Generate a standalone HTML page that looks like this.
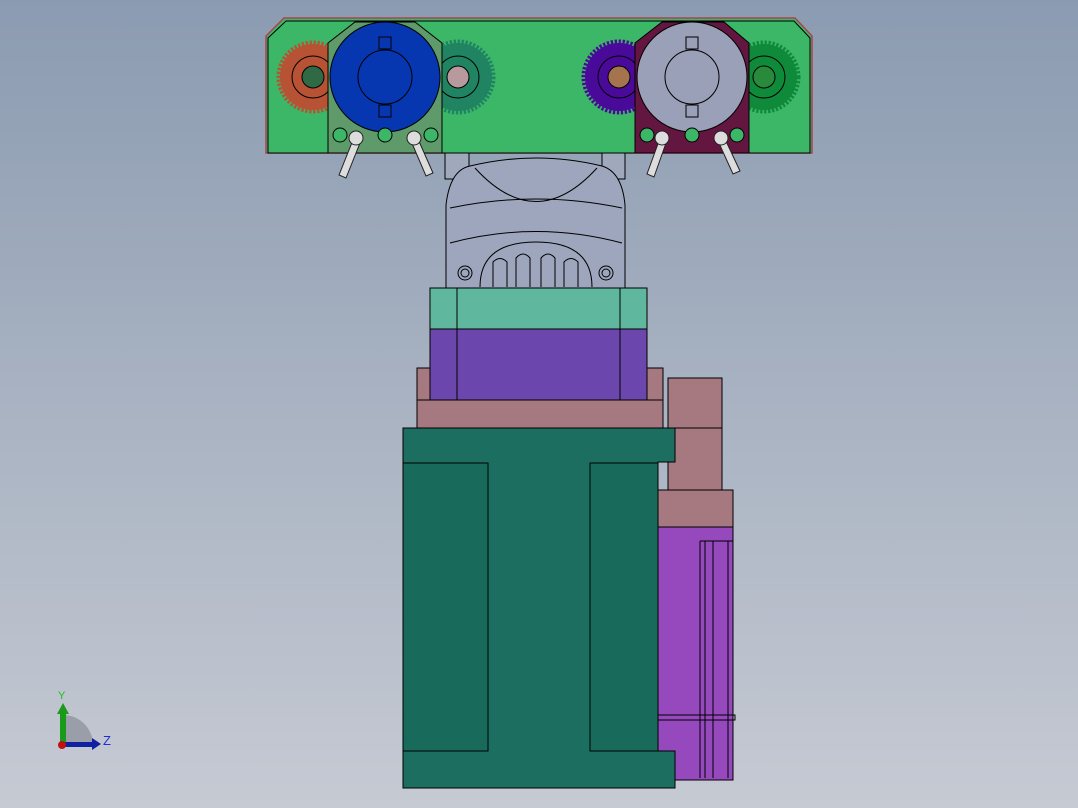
<!DOCTYPE html>
<html><head><style>html,body{margin:0;padding:0;width:1078px;height:808px;overflow:hidden}</style></head><body>
<svg width="1078" height="808" viewBox="0 0 1078 808" xmlns="http://www.w3.org/2000/svg" style="display:block">
<defs>
<linearGradient id="bg" x1="0" y1="0" x2="0" y2="1"><stop offset="0" stop-color="#8b9bb1"/><stop offset="1" stop-color="#c6cad3"/></linearGradient>
</defs>
<rect width="1078" height="808" fill="url(#bg)"/>
<g stroke="#000" stroke-width="1">
<path d="M284,18 L795,18 L812,36 L812,153 L266,153 L266,36 Z" fill="#3cb767" stroke="#b04050" stroke-width="1.5"/>
<path d="M268,38 L286,21 L794,21 L810,38 L810,153 L268,153 Z" fill="#3cb767"/>
<g stroke-dasharray="2.2 1.6" stroke-width="7">
<circle cx="313" cy="77" r="33" fill="#b85235" stroke="#b85235"/>
<circle cx="458" cy="77" r="34" fill="#208463" stroke="#208463"/>
<circle cx="619" cy="77" r="34" fill="#4a0a99" stroke="#4a0a99"/>
<circle cx="764" cy="77" r="33" fill="#0e8a3a" stroke="#0e8a3a"/>
</g>
<circle cx="313" cy="77" r="21" fill="none"/><circle cx="313" cy="77" r="11" fill="#2f6a45"/>
<circle cx="458" cy="77" r="21" fill="none"/><circle cx="458" cy="77" r="11" fill="#b89a9e"/>
<circle cx="619" cy="77" r="21" fill="none"/><circle cx="619" cy="77" r="11" fill="#a5744f"/>
<circle cx="764" cy="77" r="21" fill="none"/><circle cx="764" cy="77" r="11" fill="#2a8a3c"/>
<path d="M328,153 L328,43 L355,22 L415,22 L442,43 L442,153 Z" fill="#5e9a6a"/>
<path d="M635,153 L635,43 L662,22 L724,22 L749,43 L749,153 Z" fill="#631640"/>
<circle cx="385" cy="77" r="55" fill="#0636b0"/>
<circle cx="385" cy="77" r="27" fill="none"/>
<rect x="379" y="37" width="12" height="12" fill="none"/><rect x="379" y="105" width="12" height="12" fill="none"/>
<circle cx="692" cy="77" r="55" fill="#9aa0b8"/>
<circle cx="692" cy="77" r="27" fill="none"/>
<rect x="686" y="37" width="12" height="12" fill="none"/><rect x="686" y="105" width="12" height="12" fill="none"/>
<g fill="#3cb767">
<circle cx="340" cy="135" r="7"/><circle cx="385" cy="135" r="7"/><circle cx="431" cy="135" r="7"/>
<circle cx="647" cy="135" r="7"/><circle cx="692" cy="135" r="7"/><circle cx="737" cy="135" r="7"/>
</g>
<g fill="#ddd" stroke="#222">
<path d="M353,140 L339,175 L346,178 L360,143 Z"/><circle cx="356" cy="138" r="7"/>
<path d="M411,141 L426,176 L433,173 L418,139 Z"/><circle cx="414" cy="138" r="7"/>
<path d="M659,141 L647,174 L654,177 L666,143 Z"/><circle cx="662" cy="138" r="7"/>
<path d="M718,141 L733,174 L740,171 L725,139 Z"/><circle cx="721" cy="138" r="7"/>
</g>
<rect x="445" y="153" width="24" height="26" fill="#a0a8bc"/>
<rect x="602" y="153" width="23" height="26" fill="#a0a8bc"/>
<path d="M446,288 L446,205 Q450,170 470,166 Q536,150 602,166 Q622,172 625,205 L625,288 Z" fill="#9ea6be"/>
<path d="M475,168 Q536,235 597,168" fill="none"/>
<path d="M450,208 Q536,190 622,208" fill="none"/>
<path d="M450,243 Q536,220 622,243" fill="none"/>
<path d="M480,287 Q480,242 536,242 Q592,242 592,287" fill="none"/>
<path d="M493,287 L493,262 Q500,255 507,262 L507,287 M516,287 L516,258 Q523,250 530,258 L530,287 M541,287 L541,258 Q548,250 555,258 L555,287 M564,287 L564,262 Q571,255 578,262 L578,287" fill="none"/>
<circle cx="465" cy="273" r="7" fill="none"/><circle cx="465" cy="273" r="4" fill="none"/>
<circle cx="606" cy="273" r="7" fill="none"/><circle cx="606" cy="273" r="4" fill="none"/>
<rect x="417" y="368" width="246" height="32" fill="#a67880"/>
<rect x="668" y="378" width="54" height="50" fill="#a67880"/>
<rect x="417" y="400" width="246" height="28" fill="#a67880"/>
<rect x="668" y="428" width="54" height="62" fill="#a67880"/>
<rect x="658" y="490" width="75" height="37" fill="#a67880"/>
<rect x="658" y="527" width="75" height="253" fill="#9549bc"/>
<line x1="700" y1="541" x2="700" y2="778"/><line x1="705" y1="541" x2="705" y2="778"/><line x1="713" y1="541" x2="713" y2="778"/><line x1="728" y1="541" x2="728" y2="778"/>
<line x1="700" y1="541" x2="733" y2="541"/>
<rect x="658" y="715" width="77" height="5" fill="none"/>
<rect x="430" y="288" width="217" height="41" fill="#5fb89d"/>
<rect x="430" y="329" width="217" height="71" fill="#6b47ad"/>
<line x1="457" y1="288" x2="457" y2="400"/><line x1="620" y1="288" x2="620" y2="400"/>
<path d="M403,428 L675,428 L675,462 L658,462 L658,751 L675,751 L675,788 L403,788 Z" fill="#1c6e60"/>
<rect x="403" y="463" width="85" height="288" fill="#186a5b"/>
<rect x="590" y="463" width="68" height="288" fill="#186a5b"/>
</g>
<path d="M63,745 L63,715 A30,30 0 0 1 93,745 Z" fill="#9a9ea8"/>
<rect x="60" y="712" width="6" height="33" fill="#1a9a1a"/>
<path d="M57,714 L63,703 L69,714 Z" fill="#1a9a1a"/>
<rect x="63" y="742" width="30" height="5" fill="#1020a0"/>
<path d="M92,738 L101,744 L92,750 Z" fill="#1020a0"/>
<circle cx="62" cy="745" r="4" fill="#c01010"/>
<text x="58" y="699" font-family="Liberation Sans, sans-serif" font-size="11" fill="#20c020">Y</text>
<text x="103" y="745" font-family="Liberation Sans, sans-serif" font-size="13" fill="#2030d0">Z</text>
</svg>
</body></html>
